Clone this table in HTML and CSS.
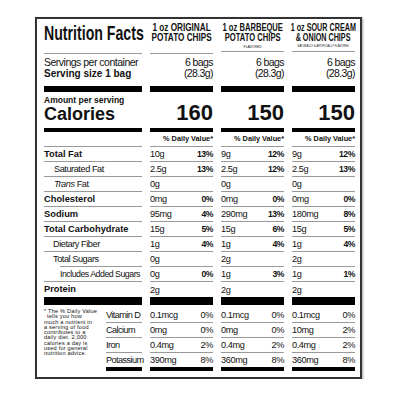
FILE: index.html
```html
<!DOCTYPE html>
<html lang="en">
<head>
    <meta charset="UTF-8">
    <meta name="viewport" content="width=device-width, initial-scale=1.0">
    <title>Nutrition Facts</title>
    <link rel="stylesheet" href="styles.css">
</head>
<body>
    <div class="label">
        <div class="facts">
            <!-- Header -->
            <div class="head head-title"><h1>Nutrition Facts</h1></div>
            <div class="head head-col c1"><span>1 oz ORIGINAL</span><span>POTATO CHIPS</span></div>
            <div class="head head-col c2 flav"><span>1 oz BARBEQUE</span><span>POTATO CHIPS</span><small>FLAVORED</small></div>
            <div class="head head-col c3 flav"><span>1 oz SOUR CREAM</span><span>&amp; ONION CHIPS</span><small>NATURALLY &amp; ARTIFICIALLY FLAVORED</small></div>

            <!-- Servings -->
            <div class="serv"><div>Servings per container</div><div class="serv-size">Serving size 1 bag</div></div>
            <div class="serv serv-val"><div>6 bags</div><div>(28.3g)</div></div>
            <div class="serv serv-val"><div>6 bags</div><div>(28.3g)</div></div>
            <div class="serv serv-val"><div>6 bags</div><div>(28.3g)</div></div>

            <div class="bar bar-lg"></div><div class="bar bar-lg"></div><div class="bar bar-lg"></div><div class="bar bar-lg"></div>

            <!-- Calories -->
            <div class="cal-block"><div class="aps">Amount per serving</div><div class="cal">Calories</div></div>
            <div class="cal-val">160</div>
            <div class="cal-val">150</div>
            <div class="cal-val">150</div>

            <div class="bar bar-md"></div><div class="bar bar-md"></div><div class="bar bar-md"></div><div class="bar bar-md"></div>

            <div class="dv"></div>
            <div class="dv">% Daily Value*</div>
            <div class="dv">% Daily Value*</div>
            <div class="dv">% Daily Value*</div>

            <!-- Nutrients -->
            <div class="name bold">Total Fat</div>
            <div class="val"><span>10g</span><b>13%</b></div>
            <div class="val"><span>9g</span><b>12%</b></div>
            <div class="val"><span>9g</span><b>12%</b></div>

            <div class="name sub">Saturated Fat</div>
            <div class="val"><span>2.5g</span><b>13%</b></div>
            <div class="val"><span>2.5g</span><b>12%</b></div>
            <div class="val"><span>2.5g</span><b>13%</b></div>

            <div class="name sub"><i>Trans</i> Fat</div>
            <div class="val"><span>0g</span></div>
            <div class="val"><span>0g</span></div>
            <div class="val"><span>0g</span></div>

            <div class="name bold">Cholesterol</div>
            <div class="val"><span>0mg</span><b>0%</b></div>
            <div class="val"><span>0mg</span><b>0%</b></div>
            <div class="val"><span>0mg</span><b>0%</b></div>

            <div class="name bold">Sodium</div>
            <div class="val"><span>95mg</span><b>4%</b></div>
            <div class="val"><span>290mg</span><b>13%</b></div>
            <div class="val"><span>180mg</span><b>8%</b></div>

            <div class="name bold">Total Carbohydrate</div>
            <div class="val"><span>15g</span><b>5%</b></div>
            <div class="val"><span>15g</span><b>6%</b></div>
            <div class="val"><span>15g</span><b>5%</b></div>

            <div class="name sub2">Dietary Fiber</div>
            <div class="val"><span>1g</span><b>4%</b></div>
            <div class="val"><span>1g</span><b>4%</b></div>
            <div class="val"><span>1g</span><b>4%</b></div>

            <div class="name sub2 sugars">Total Sugars</div>
            <div class="val"><span>0g</span></div>
            <div class="val"><span>2g</span></div>
            <div class="val"><span>2g</span></div>

            <div class="name added">Includes Added Sugars</div>
            <div class="val"><span>0g</span><b>0%</b></div>
            <div class="val"><span>1g</span><b>3%</b></div>
            <div class="val"><span>1g</span><b>1%</b></div>

            <div class="name bold last">Protein</div>
            <div class="val last"><span>2g</span></div>
            <div class="val last"><span>2g</span></div>
            <div class="val last"><span>2g</span></div>

            <div class="bar bar-xl"></div><div class="bar bar-xl"></div><div class="bar bar-xl"></div><div class="bar bar-xl"></div>

            <!-- Vitamins and minerals -->
            <div class="foot foot-label">
                <p class="note"><span class="ast">*</span> The % Daily Value<br><span class="in">tells you how</span><br>much a nutrient in<br>a serving of food<br>contributes to a<br>daily diet. 2,000<br>calories a day is<br>used for general<br>nutrition advice.</p>
                <div class="minerals">
                    <div class="mrow">Vitamin D</div>
                    <div class="mrow">Calcium</div>
                    <div class="mrow">Iron</div>
                    <div class="mrow">Potassium</div>
                </div>
            </div>
            <div class="foot">
                <div class="mrow val"><span>0.1mcg</span><span>0%</span></div>
                <div class="mrow val"><span>0mg</span><span>0%</span></div>
                <div class="mrow val"><span>0.4mg</span><span>2%</span></div>
                <div class="mrow val"><span>390mg</span><span>8%</span></div>
            </div>
            <div class="foot">
                <div class="mrow val"><span>0.1mcg</span><span>0%</span></div>
                <div class="mrow val"><span>0mg</span><span>0%</span></div>
                <div class="mrow val"><span>0.4mg</span><span>2%</span></div>
                <div class="mrow val"><span>360mg</span><span>8%</span></div>
            </div>
            <div class="foot">
                <div class="mrow val"><span>0.1mcg</span><span>0%</span></div>
                <div class="mrow val"><span>10mg</span><span>2%</span></div>
                <div class="mrow val"><span>0.4mg</span><span>2%</span></div>
                <div class="mrow val"><span>360mg</span><span>8%</span></div>
            </div>
        </div>
    </div>
</body>
</html>
```

FILE: styles.css
```css
/* Global Styles */
* {
    box-sizing: border-box;
    margin: 0;
    padding: 0;
}

body {
    background: #ffffff;
    color: #111111;
    font-family: "Liberation Sans", Arial, sans-serif;
}

.label {
    width: 327px;
    margin: 17px 0 0 35px;
    padding: 0 5px 6px 7px;
    border: 2px solid #333333;
    box-shadow: 1px 1px 2px rgba(0, 0, 0, 0.35);
}

.facts {
    display: grid;
    grid-template-columns: 98px 63px 63px 63px;
    column-gap: 8px;
    white-space: nowrap;
}

/* Header */
.head {
    height: 35px;
    border-bottom: 1px solid #999999;
}

.head-title h1 {
    display: inline-block;
    padding-top: 4px;
    font-size: 20.5px;
    line-height: 20px;
    font-weight: 700;
    transform: scaleX(0.69);
    transform-origin: left top;
}

.head-col {
    display: flex;
    flex-direction: column;
    align-items: center;
    padding-top: 4px;
    font-size: 10px;
    line-height: 10px;
    font-weight: 700;
}

.head-col span {
    display: block;
}

.c1 span { transform: scaleX(0.82); }
.c2 span { transform: scaleX(0.76); }
.c3 span { transform: scaleX(0.72); }

.head-col small {
    font-size: 4px;
    line-height: 5px;
    margin-top: 1px;
    font-weight: 400;
    transform: scaleX(0.85);
}

.c3 small {
    font-size: 3.4px;
    transform: scaleX(0.8);
}

.flav {
    height: 33px;
    align-self: start;
}

/* Servings */
.serv {
    height: 32px;
    padding-top: 3px;
    font-size: 10.5px;
    line-height: 11px;
    letter-spacing: -0.5px;
}

.serv-size {
    font-size: 10px;
    font-weight: 700;
    letter-spacing: 0;
}

.serv-val {
    text-align: right;
    font-size: 10.5px;
    letter-spacing: -0.6px;
}

/* Bars */
.bar {
    background-color: #000000;
}

.bar-lg { height: 6px; }
.bar-md { height: 4px; }
.bar-xl { height: 8px; }

/* Calories */
.cal-block {
    height: 36px;
    padding-top: 4px;
}

.aps {
    font-size: 8.5px;
    line-height: 8px;
    font-weight: 700;
}

.cal {
    font-size: 18px;
    line-height: 20px;
    font-weight: 700;
}

.cal-val {
    display: flex;
    align-items: flex-end;
    justify-content: flex-end;
    padding-bottom: 3px;
    font-size: 22px;
    line-height: 24px;
    font-weight: 700;
}

.dv {
    height: 15px;
    border-bottom: 1px solid #999999;
    text-align: right;
    font-size: 7.3px;
    line-height: 14px;
    font-weight: 700;
}

/* Nutrient rows */
.name,
.val {
    height: 15px;
    border-bottom: 1px solid #999999;
    font-size: 9.2px;
    line-height: 14px;
    letter-spacing: -0.45px;
}

.name.bold {
    font-size: 9.3px;
    font-weight: 700;
    letter-spacing: 0;
}

.sub { padding-left: 10px; }
.sub2 { padding-left: 9px; }

.sugars {
    border-bottom: 0;
}

.added {
    padding-left: 16px;
    position: relative;
    font-size: 8.8px;
    letter-spacing: -0.5px;
}

/* indented rule between Total Sugars and Added Sugars */
.added::before {
    content: "";
    position: absolute;
    left: 16px;
    right: 0;
    top: -1px;
    border-top: 1px solid #999999;
}

.val {
    display: flex;
    align-items: center;
    justify-content: space-between;
}

.val span {
    font-size: 9.2px;
    letter-spacing: -0.4px;
}

.val b {
    font-size: 8.6px;
    font-weight: 700;
    letter-spacing: -0.4px;
}

.last {
    border-bottom: 0;
}

/* Footer */
.foot {
    padding-top: 3px;
}

.foot-label {
    display: flex;
    gap: 6px;
    padding-top: 0;
}

.note {
    width: 57px;
    padding-top: 4px;
    font-size: 5.6px;
    line-height: 5.3px;
    letter-spacing: 0.2px;
}

.note .in {
    padding-left: 3px;
}

.minerals {
    width: 36px;
    padding-top: 3px;
}

.mrow {
    height: 15px;
    border-bottom: 1px solid #999999;
    font-size: 9.2px;
    line-height: 14px;
    letter-spacing: -0.6px;
}

.mrow:last-child {
    height: 18px;
    border-bottom: 4px solid #000000;
}

.foot .val span {
    font-size: 9.2px;
    letter-spacing: -0.4px;
}
```
